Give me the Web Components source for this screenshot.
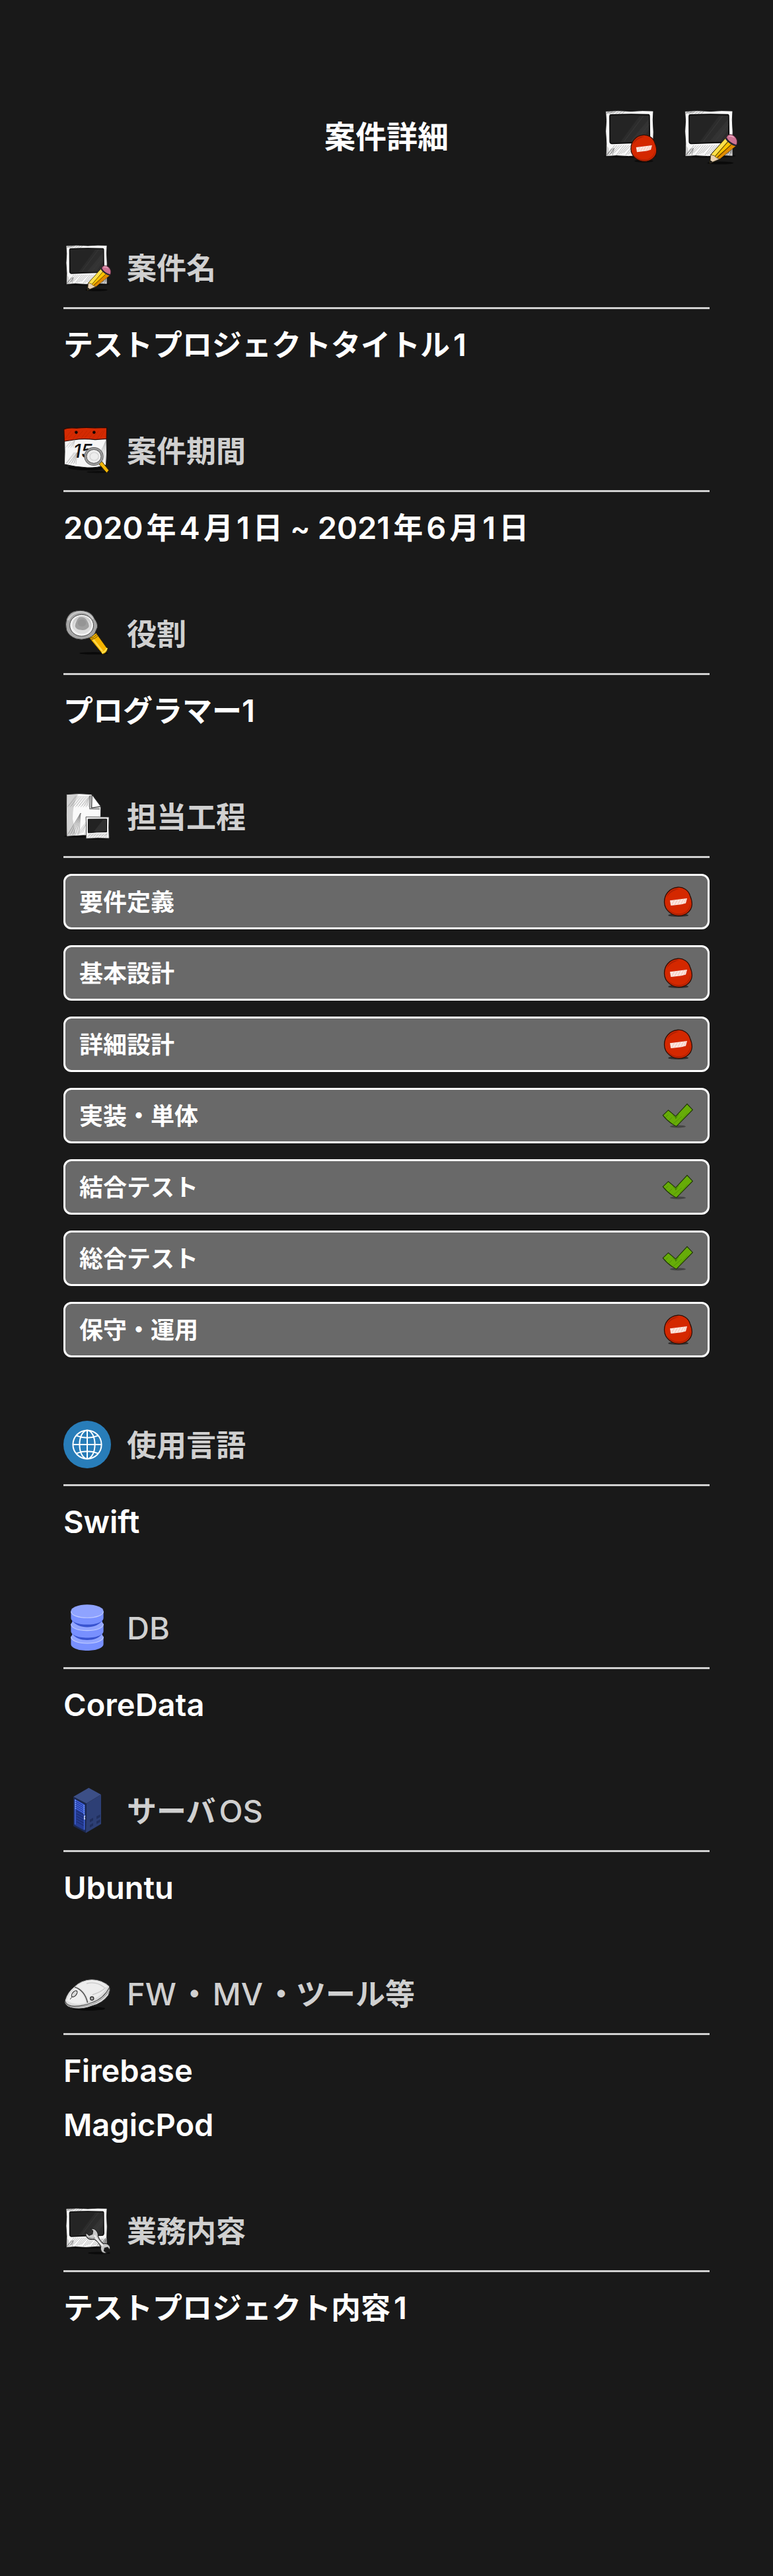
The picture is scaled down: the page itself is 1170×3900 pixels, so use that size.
<!DOCTYPE html>
<html lang="ja">
<head>
<meta charset="utf-8">
<meta name="viewport" content="width=device-width, initial-scale=1">
<title>案件詳細</title>
<style>
  html, body { margin: 0; background: #191919; }
  body {
    min-height: 100vh;
    color: #fff;
    font-family: Inter, "Noto Sans CJK JP", sans-serif;
    font-size: 45px;
    line-height: 54px;
  }
</style>
</head>
<body>
<project-detail>
  <nav-bar slot="header">
    案件詳細
    <icon-button slot="actions" icon="photo-remove" label="削除"></icon-button>
    <icon-button slot="actions" icon="photo-edit" label="編集"></icon-button>
  </nav-bar>

  <detail-section icon="photo-edit">
    <span slot="heading">案件名</span>
    <detail-value>テストプロジェクトタイトル<latin-run>1</latin-run></detail-value>
  </detail-section>
  <detail-section icon="calendar">
    <span slot="heading">案件期間</span>
    <detail-value><latin-run lead>2020</latin-run>年<latin-run>4</latin-run>月<latin-run>1</latin-run>日 ~ <latin-run lead>2021</latin-run>年<latin-run>6</latin-run>月<latin-run>1</latin-run>日</detail-value>
  </detail-section>
  <detail-section icon="search">
    <span slot="heading">役割</span>
    <detail-value>プログラマー<latin-run lead>1</latin-run></detail-value>
  </detail-section>
  <detail-section icon="document">
    <span slot="heading">担当工程</span>
    <process-row state="remove">要件定義</process-row>
    <process-row state="remove">基本設計</process-row>
    <process-row state="remove">詳細設計</process-row>
    <process-row state="check">実装・単体</process-row>
    <process-row state="check">結合テスト</process-row>
    <process-row state="check">総合テスト</process-row>
    <process-row state="remove">保守・運用</process-row>
  </detail-section>
  <detail-section icon="globe">
    <span slot="heading">使用言語</span>
    <detail-value><latin-run lead>Swift</latin-run></detail-value>
  </detail-section>
  <detail-section icon="database">
    <span slot="heading"><latin-run lead>DB</latin-run></span>
    <detail-value><latin-run lead>CoreData</latin-run></detail-value>
  </detail-section>
  <detail-section icon="server">
    <span slot="heading">サーバ<latin-run>OS</latin-run></span>
    <detail-value><latin-run lead>Ubuntu</latin-run></detail-value>
  </detail-section>
  <detail-section icon="mouse">
    <span slot="heading"><latin-run lead>FW</latin-run>・<latin-run>MV</latin-run>・ツール等</span>
    <detail-value><latin-run lead>Firebase</latin-run></detail-value>
    <detail-value><latin-run lead>MagicPod</latin-run></detail-value>
  </detail-section>
  <detail-section icon="photo-tool">
    <span slot="heading">業務内容</span>
    <detail-value>テストプロジェクト内容<latin-run>1</latin-run></detail-value>
  </detail-section>
</project-detail>

<script>
// Hatching used for the hand-drawn icons
const hatch = (x, y, w, h, step, color, opacity) => {
  let d = '';
  for (let i = 0; i < w; i += step) {
    const j = (i * 7) % 4;
    d += `M${x + i} ${y + h - j}l${Math.min(h * 0.7, w - i)} ${-h + j + 1}`;
  }
  return `<path d="${d}" fill="none" stroke="${color}" stroke-width="0.7" opacity="${opacity}"/>`;
};

const photo = `
  <ellipse cx="36" cy="61" rx="34" ry="2.5" fill="#080808" opacity=".7"/>
  <path d="M4 3L20 2.2L37 3L52 2.2L66 2.6L65.4 14L66.2 30L65.6 46L66 61L50 60.4L34 61.4L18 60.6L4.4 61.4L5 45L4 29L4.8 15Z" fill="#f8f8f8" stroke="#111" stroke-width=".8"/>
  <path d="M4.5 3H18L12 6H5ZM5 47L8 51V61H5ZM50 60H66V48L61 54Z" fill="#aaa" opacity=".55"/>
  ${hatch(6, 46, 58, 14, 3, '#888', .75)}
  ${hatch(5, 2.5, 24, 4, 2, '#777', .7)}
  ${hatch(50, 48, 15, 12, 2, '#666', .7)}
  ${hatch(5, 50, 10, 10, 2, '#666', .7)}
  <path d="M10.5 7.6Q35 6.4 59.5 7.4Q61 7.6 60.8 10L61.2 40Q61 43 59 43.4Q35 44 12 45Q9.6 44.6 9.6 42L9.4 11Q9.2 8 10.5 7.6Z" fill="#242424" stroke="#0a0a0a" stroke-width="1.4"/>
  <path d="M23 43L48 9L60 8.5V40L58 42.5Z" fill="#2c2c2c"/>
  <path d="M36 42L60 13V27L50 42Z" fill="#333"/>
  <path d="M28 42L53 9M43 42L60 20" stroke="#3a3a3a" stroke-width=".8"/>`;

const disc = `
  <ellipse cx="37" cy="67" rx="23" ry="3.5" fill="#000" opacity=".55"/>
  <path d="M36 3.4C48 2.4 60 10 63.5 22C67 30 68.5 36 68 43C67 58 53 68 39 68C22 68 6 56 5.4 38C4.6 21 16 5 36 3.4Z" fill="#d42800" stroke="#301006" stroke-width="2"/>
  <path d="M10 27C14 13 26 6 39 7C24 11 16 18 10 27ZM12 50C20 62 36 66 48 62C58 58 63 50 64 40C67 54 52 66 39 66C27 66 16 60 12 50Z" fill="#9c1c04" opacity=".65"/>
  <path d="M18 33.5L57 28.5L54 39.6L44 42.4L20 45Z" fill="#fbe6df"/>
  <path d="M22 43L28 33M29 43L35 32M36 42L42 31M43 42L49 30M50 40L54 30" stroke="#f3b3a2" stroke-width="1.1"/>`;

const icons = {
  'photo-remove': `${photo}
    <g transform="translate(34 32) scale(.53)">${disc}</g>`,

  'photo-edit': `${photo}
    <ellipse cx="50" cy="70" rx="17" ry="1.8" fill="#000" opacity=".6"/>
    <path d="M57 38L70.6 47L49 65L36.4 70.4L37.6 59.4Z" fill="#fbc400" stroke="#221a04" stroke-width="1"/>
    <path d="M66 45L70 48L49 65L45 62Z" fill="#e08a00"/>
    <path d="M57 38L61 41L42.5 61.6L38 59.4Z" fill="#ffe04a"/>
    <path d="M61 41L43 61.6M65.6 44.6L46 63" stroke="#5c4300" stroke-width=".9"/>
    <path d="M37.6 59.4L42 60.6L44.6 63L49 65L36.6 70.2Z" fill="#e9d2b4" stroke="#3a3020" stroke-width=".6"/>
    <path d="M37 66.6L40 68.6L36.5 70.2Z" fill="#151515"/>
    <path d="M58 37C59 33.4 63 32.2 66.8 34.4C71 37 73 42 70.8 46.8C67 46 59.8 42 58 37Z" fill="#cd7394" stroke="#4c2334" stroke-width=".8"/>
    <path d="M61 35.6Q64 34 67.6 37" fill="none" stroke="#e9a5bc" stroke-width="1.4"/>
    <path d="M57 38Q61.6 45 70.4 47.6" fill="none" stroke="#242436" stroke-width="1.8"/>`,

  'photo-tool': `${photo}
    <ellipse cx="54" cy="70" rx="17" ry="1.8" fill="#000" opacity=".6"/>
    <path d="M41.4 33.4Q47 32 50 36.4Q53 40 52.4 44.6Q55 51.6 60.6 56Q66.4 54.6 70 59.4Q71.6 62 70.4 65.4L66.8 61.4L62.4 62.6L61.4 66.8L65.6 69.6Q60 71.6 57.4 67.6Q55.4 64 56.6 60.2Q53 52.4 46.4 49.2Q39 50.4 35.4 46Q33.2 43 34 39.4L39 43.4L43.8 41.4L44.6 36.4Z" fill="#c9c9c9" stroke="#222" stroke-width="1.2"/>
    <path d="M47 43Q52 53 60 59" fill="none" stroke="#eee" stroke-width="2.2"/>
    <path d="M38 46Q44 49 48 47" fill="none" stroke="#8d8d8d" stroke-width="1"/>`,

  calendar: `
    <ellipse cx="36" cy="62" rx="29" ry="4" fill="#050505" opacity=".8"/>
    <path d="M1.6 18L65 18L65.6 40L64.6 58Q52 62.6 36 62Q18 61 1.4 57L2 38Z" fill="#f6f6f6" stroke="#1a1a1a" stroke-width="1"/>
    ${hatch(3, 38, 18, 19, 2, '#999', .7)}
    ${hatch(3, 20, 14, 12, 2, '#aaa', .6)}
    ${hatch(48, 21, 16, 34, 3, '#aaa', .6)}
    <path d="M.8 4Q6 1 20 2.2Q34 .6 48 2L65.6 1.4L65.2 18.4L48 19.6Q30 17.6 15 20L1.4 22Z" fill="#d42a02" stroke="#2c0a02" stroke-width="1.2"/>
    ${hatch(2, 5, 60, 14, 6, '#9e1c00', .5)}
    <circle cx="19.4" cy="8.6" r="2.3" fill="#120603"/><circle cx="46.4" cy="8.6" r="2.3" fill="#120603"/>
    <text x="15" y="47" font-family="Inter, sans-serif" font-size="28" font-style="italic" font-weight="500" fill="#111">15</text>
    <ellipse cx="52" cy="68.6" rx="17" ry="1.6" fill="#000" opacity=".5"/>
    <path d="M53 55.6L58 52.4L68.8 66L65.6 70Z" fill="#f2b705" stroke="#3a2800" stroke-width="1"/>
    <ellipse cx="46" cy="45" rx="12.6" ry="12" fill="#ededed" stroke="#4e4e4e" stroke-width="4"/>
    <ellipse cx="46" cy="45" rx="12.6" ry="12" fill="none" stroke="#9b9b9b" stroke-width="2.6"/>
    <ellipse cx="46.6" cy="45" rx="6.6" ry="6" fill="none" stroke="#d2d2d2" stroke-width="1.2"/>`,

  search: `
    <ellipse cx="46" cy="66" rx="22" ry="1.8" fill="#050505" opacity=".8"/>
    <path d="M38.4 42L49.6 35.4L66.8 59.4Q66 65.4 59.4 67.6Z" fill="#f5b400" stroke="#3a2800" stroke-width="1"/>
    <path d="M45 45L59 63" stroke="#ffd84a" stroke-width="2.6"/>
    <path d="M39.8 43.6Q46 43 50.8 37.4M41.6 45.6Q48 44.4 52.4 39.6" fill="none" stroke="#6b4a00" stroke-width="1"/>
    <path d="M58 65.4Q64.4 63.4 65.8 58" fill="none" stroke="#ffe14d" stroke-width="2.4"/>
    <path d="M15 3Q25 -.4 36 3Q44 6 47 13.6Q52.4 21 51.4 27Q49 32 47.6 36Q43 42 36 43.6Q28 46.6 19 44Q8 40 4.6 31Q2.4 22 4.8 14Q8 6 15 3Z" fill="#a6a6a6" stroke="#353535" stroke-width="1"/>
    <path d="M7 16Q13 4 27 3.4Q38 4 45 14" fill="none" stroke="#c9c9c9" stroke-width="2.4"/>
    <ellipse cx="27.6" cy="23.8" rx="18" ry="16.4" fill="#f1f1f1" stroke="#444" stroke-width="1"/>
    <ellipse cx="28" cy="22.8" rx="14.4" ry="13.2" fill="#cfcfcf"/>
    <ellipse cx="28" cy="25" rx="13" ry="11.6" fill="#dedede"/>
    <path d="M24 11.6Q31 10 35 15.4Q39 21 38.6 26Q34 32 27 30.8Q18.6 30 17.6 25Q19 16 24 11.6Z" fill="#a0a0a0"/>
    <ellipse cx="28" cy="20" rx="6.4" ry="5.6" fill="#959595"/>`,

  document: `
    <ellipse cx="30" cy="66" rx="29" ry="2" fill="#050505" opacity=".8"/>
    <path d="M4.8 2.6L24 1.6L43.2 2.6L56.8 20.6L56.4 44L57 65.4L30 64.8L5 66.2L4.4 34Z" fill="#fafafa" stroke="#222" stroke-width="1"/>
    <path d="M5 3H22Q14 16 14 40L18 60V65H5Z" fill="#aaa" opacity=".5"/>
    ${hatch(6, 4, 34, 18, 2, '#8a8a8a', .6)}
    ${hatch(6, 30, 20, 34, 2, '#7c7c7c', .65)}
    ${hatch(20, 44, 16, 20, 3, '#999', .65)}
    <path d="M43.2 2.6L42.6 23L56.8 21Z" fill="#fff" stroke="#222" stroke-width="1.2"/>
    <path d="M40.6 4L40 24.4L55 24.6" fill="none" stroke="#777" stroke-width="1.6"/>
    <ellipse cx="52" cy="69" rx="19" ry="1.8" fill="#050505"/>
    <path d="M34 36.8L69 37L68.6 53L69.2 69.2L52 68.8L34.2 69.4L34.8 52Z" fill="#f4f4f4" stroke="#333" stroke-width=".8"/>
    ${hatch(36, 61, 30, 7, 2, '#888', .6)}
    <path d="M37.4 40.2L65.6 40L65.4 59.6Q50 59.6 37.6 60.8Z" fill="#222" stroke="#080808" stroke-width="1"/>
    <path d="M46 59L60 41H65V58Z" fill="#303030"/>`,

  globe: `
    <circle cx="36" cy="36" r="36" fill="#287db9"/>
    <g fill="none" stroke="#fff" stroke-width="2">
      <circle cx="36" cy="36" r="21.6"/>
      <ellipse cx="36" cy="36" rx="11.6" ry="21.6"/>
      <path d="M36 14.4V57.6M14.4 36H57.6M19 22.4Q36 29 53 22.4M19 49.6Q36 43 53 49.6"/>
    </g>`,

  database: `
    <path d="M13 22H59V60H13Z" fill="#3853d0"/>
    <path d="M11.4 50Q14 46 36 46Q58 46 60.6 50V61C60.6 67 49.6 71 36 71S11.4 67 11.4 61Z" fill="#7890ff"/>
    <path d="M11.4 50C12 56 22 60 36 60S60 56 60.6 50L58 46H14Z" fill="#92a5ff"/>
    <path d="M11.6 50.4C12 56 22 60 36 60S60 56 60.4 50.4" fill="none" stroke="#c1ccff" stroke-width="1.1"/>
    <path d="M13 44C16 52 27 55 36 55S56 52 59 44Z" fill="#3853d0"/>
    <path d="M11.4 31L14 27H58L60.6 31V41.4C60.6 47.4 49.6 51.4 36 51.4S11.4 47.4 11.4 41.4Z" fill="#7890ff"/>
    <path d="M11.4 30.6C12 36.6 22 40.6 36 40.6S60 36.6 60.6 30.6L58 27H14Z" fill="#92a5ff"/>
    <path d="M11.6 31C12 36.8 22 40.6 36 40.6S60 36.8 60.4 31" fill="none" stroke="#c1ccff" stroke-width="1.1"/>
    <path d="M13 24C16 32 27 35.4 36 35.4S56 32 59 24Z" fill="#3853d0"/>
    <path d="M11.4 11H60.6V21.4C60.6 27.4 49.6 31.6 36 31.6S11.4 27.4 11.4 21.4Z" fill="#7890ff"/>
    <ellipse cx="36" cy="11.2" rx="24.6" ry="10" fill="#8fa3ff"/>
    <path d="M11.6 12C12 17.4 22 21.2 36 21.2S60 17.4 60.4 12" fill="none" stroke="#c1ccff" stroke-width="1.1"/>`,

  server: `
    <path d="M38.3 1.7L57 12L34.7 25.4L15 15.2Z" fill="#3c4f86"/>
    <path d="M57 12V56.6L34 70L34.7 25.4Z" fill="#2d3f75"/>
    <path d="M15 15.2L34.7 25.4L34 70L15 59.7Z" fill="#1b2850"/>
    <path d="M17 18.6L32.4 27V66.6L17 58Z" fill="#253c93"/>
    <g stroke="#4668ec" stroke-width="1.3">
      <path d="M17.4 20L32 28.4M17.4 23L32 31.4M17.4 26L32 34.4M17.4 29L32 37.4M17.4 32L32 40.4"/>
    </g>
    <g stroke="#1b2c72" stroke-width="1.3">
      <path d="M20 37L31 43M20 41L31 47M20 45L31 51M20 49L31 55M20 53L31 59"/>
    </g>
    <path d="M17.6 19V57M31.6 28V65" stroke="#4568e0" stroke-width="1.4"/>
    <path d="M18.2 20V35M31 28V42" stroke="#8fb6ff" stroke-width="1.2" stroke-dasharray="1.4 1.6"/>
    <path d="M33 44L31.8 45V49L33 48.6" fill="none" stroke="#e6eeff" stroke-width="1.2"/>
    <path d="M40 50L45 47V51L40 54ZM50 45L55.6 42V46L50 49ZM40 58L45 55V59L40 62ZM50 52.6L55.6 49.6V53.6L50 56.6Z" fill="#212f5c"/>`,

  mouse: `
    <ellipse cx="38" cy="59" rx="25" ry="3" fill="#050505" opacity=".8"/>
    <path d="M2.4 46Q6 34 16 26Q27 15 43 14.6Q59 15 69.6 25Q71.6 32 68 39Q59 51 43 55Q31 60 17 58.8Q4 57 2 50Z" fill="#dcdcdc" stroke="#2a2a2a" stroke-width="1"/>
    <path d="M20 25Q31 16 44 16Q58 17 66 25Q60 40 38 48Q34 32 20 25Z" fill="#ededed"/>
    <path d="M2.6 48Q5 55 17 55.4Q31 55 43 50Q61 44 69.6 27" fill="none" stroke="#555" stroke-width="1.2"/>
    <path d="M3 51Q9 57 18 57Q31 57 43 52.6Q61 46 70 31" fill="none" stroke="#8b8b8b" stroke-width="1"/>
    <path d="M17 26.4Q32 31 36.6 50" fill="none" stroke="#444" stroke-width="1.4"/>
    <path d="M18 28Q30 33 34 50Q18 55 5 47Q9 36 18 28Z" fill="#efefef"/>
    <path d="M10 45Q15 39 20 32" fill="none" stroke="#444" stroke-width="1"/>
    <ellipse cx="16.6" cy="36.6" rx="5.6" ry="3" transform="rotate(-50 16.6 36.6)" fill="#d8d8d8" stroke="#333" stroke-width="1.2"/>
    <circle cx="43.2" cy="43.6" r="2.6" fill="#aaa" stroke="#333" stroke-width="1.4"/>
    <path d="M35 21Q50 17 62 27M44 38Q57 34 64 27" fill="none" stroke="#c9c9c9" stroke-width="1.4"/>`,

  remove: disc,

  check: `
    <ellipse cx="36" cy="60.6" rx="18" ry="3" fill="#000" opacity=".35"/>
    <path d="M2 35.4L14.4 23.6L31 37.6L57 9.4L69.6 22.8L32.6 60.6Q14 51 2 35.4Z" fill="#66ac08" stroke="#1d3008" stroke-width="1.6"/>
    <path d="M8 40L14 34M16 47L23 40M26 54L45 38M40 50L58 30" fill="none" stroke="#4f8d06" stroke-width="1.2"/>
    <path d="M25 35L31 41L38 33M31 37.6V43L35 39" fill="none" stroke="#397206" stroke-width="1.2"/>`
};

class SketchIcon extends HTMLElement {
  connectedCallback() {
    if (this.shadowRoot) return;
    this.attachShadow({ mode: 'open' }).innerHTML = `
      <style>
        :host { display: block; flex: none; width: var(--icon-size, 72px); height: var(--icon-size, 72px); }
        svg { display: block; width: 100%; height: 100%; overflow: visible; }
      </style>
      <svg viewBox="0 0 72 72" aria-hidden="true">${icons[this.getAttribute('name')]}</svg>`;
  }
}

// Latin letters and digits: a little larger than the kanji and kana around
// them, with a thin gap on each side ("lead" drops the gap before the run).
// The element is inline, so its template must hold no white space.
class LatinRun extends HTMLElement {
  connectedCallback() {
    if (this.shadowRoot) return;
    this.attachShadow({ mode: 'open' }).innerHTML = `<style>
        :host { display: inline; margin: 0 5px; font-size: 47px; line-height: 48px; font-weight: var(--latin-weight, 600); }
        :host([lead]) { margin-left: 0; }
      </style><slot></slot>`;
  }
}

class IconButton extends HTMLElement {
  connectedCallback() {
    if (this.shadowRoot) return;
    this.attachShadow({ mode: 'open' }).innerHTML = `
      <style>
        :host { display: block; --icon-size: 84px; }
        button { display: block; margin: 0; padding: 0; border: 0; background: none; cursor: pointer; }
      </style>
      <button type="button" aria-label="${this.getAttribute('label')}">
        <sketch-icon name="${this.getAttribute('icon')}"></sketch-icon>
      </button>`;
  }
}

class NavBar extends HTMLElement {
  connectedCallback() {
    if (this.shadowRoot) return;
    this.attachShadow({ mode: 'open' }).innerHTML = `
      <style>
        :host { display: block; }
        header {
          display: grid; grid-template-columns: 1fr auto 1fr; align-items: center;
          padding: 165px 54px 0;
        }
        h1 { grid-column: 2; margin: 0; font-size: 47px; line-height: 60px; font-weight: 700; }
        .actions { display: flex; justify-content: flex-end; gap: 36px; }
      </style>
      <header>
        <h1><slot></slot></h1>
        <div class="actions"><slot name="actions"></slot></div>
      </header>`;
  }
}

class DetailSection extends HTMLElement {
  connectedCallback() {
    if (this.shadowRoot) return;
    this.attachShadow({ mode: 'open' }).innerHTML = `
      <style>
        :host { display: block; }
        .head {
          display: flex; align-items: center; gap: 24px;
          padding-bottom: 24px; border-bottom: 3px solid #d0d0d0;
        }
        h2 {
          margin: 0; padding-top: 4px;
          color: #d0d0d0; font-size: 45px; line-height: 54px; font-weight: 600;
          --latin-weight: 500;
        }
        .body { display: flex; flex-direction: column; gap: 24px; padding-top: 24px; }
      </style>
      <section>
        <div class="head">
          <sketch-icon name="${this.getAttribute('icon')}"></sketch-icon>
          <h2><slot name="heading"></slot></h2>
        </div>
        <div class="body"><slot></slot></div>
      </section>`;
  }
}

class DetailValue extends HTMLElement {
  connectedCallback() {
    if (this.shadowRoot) return;
    this.attachShadow({ mode: 'open' }).innerHTML = `
      <style>:host { display: block; padding-top: 4px; font-weight: 600; }</style><slot></slot>`;
  }
}

class ProcessRow extends HTMLElement {
  connectedCallback() {
    if (this.shadowRoot) return;
    this.attachShadow({ mode: 'open' }).innerHTML = `
      <style>
        :host {
          display: flex; align-items: center; justify-content: space-between;
          box-sizing: border-box; min-height: 84px; padding: 0 21px;
          border: 3px solid #fff; border-radius: 12px; background: #696969;
          font-size: 36px; line-height: 48px; font-weight: 700;
          --icon-size: 48px;
        }
        span { padding-top: 2px; }
      </style>
      <span><slot></slot></span>
      <sketch-icon name="${this.getAttribute('state')}"></sketch-icon>`;
  }
}

class ProjectDetail extends HTMLElement {
  connectedCallback() {
    if (this.shadowRoot) return;
    this.attachShadow({ mode: 'open' }).innerHTML = `
      <style>
        :host { display: block; }
        main { display: flex; flex-direction: column; gap: 96px; padding: 120px 96px 240px; }
      </style>
      <slot name="header"></slot>
      <main><slot></slot></main>`;
  }
}

customElements.define('sketch-icon', SketchIcon);
customElements.define('latin-run', LatinRun);
customElements.define('icon-button', IconButton);
customElements.define('nav-bar', NavBar);
customElements.define('detail-section', DetailSection);
customElements.define('detail-value', DetailValue);
customElements.define('process-row', ProcessRow);
customElements.define('project-detail', ProjectDetail);
</script>
</body>
</html>
